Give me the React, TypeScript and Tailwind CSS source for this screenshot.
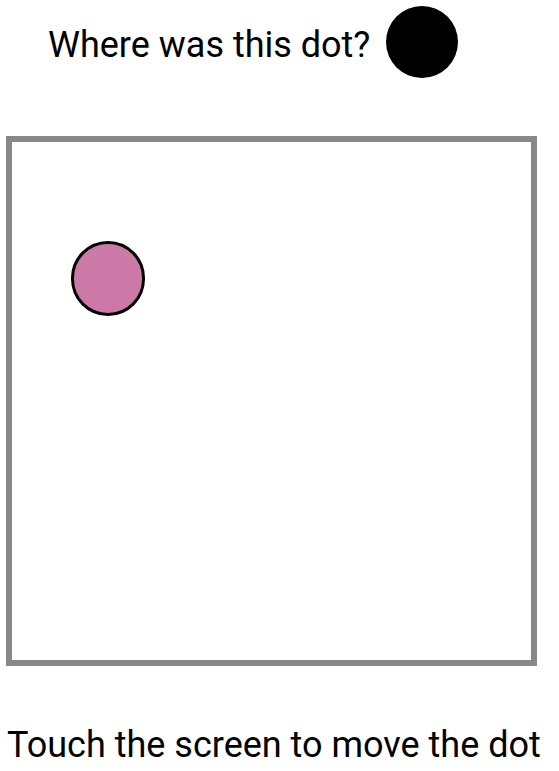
export default function App() {
  return (
    <div className="w-[559px] h-[771px] bg-white text-black overflow-hidden" style={{ fontFamily: "Roboto, sans-serif" }}>
      <div className="flex items-start pt-[6px] pl-[48px] h-[78px]">
        <span className="mt-[21px] text-[36px] leading-[36px]">Where was this dot?</span>
        <div className="ml-[16px] w-[72px] h-[72px] rounded-full bg-black" />
      </div>
      <div className="ml-[6px] mt-[58px] w-[531px] h-[530px] border-[6px] border-[#888888] relative">
        <div className="absolute left-[59px] top-[99px] w-[74px] h-[75px] rounded-full bg-[#cc79a7] border-[3px] border-black" />
      </div>
      <div className="mt-[61px] pl-[7px] text-[36px] leading-[36px] whitespace-nowrap">Touch the screen to move the dot</div>
    </div>
  );
}
